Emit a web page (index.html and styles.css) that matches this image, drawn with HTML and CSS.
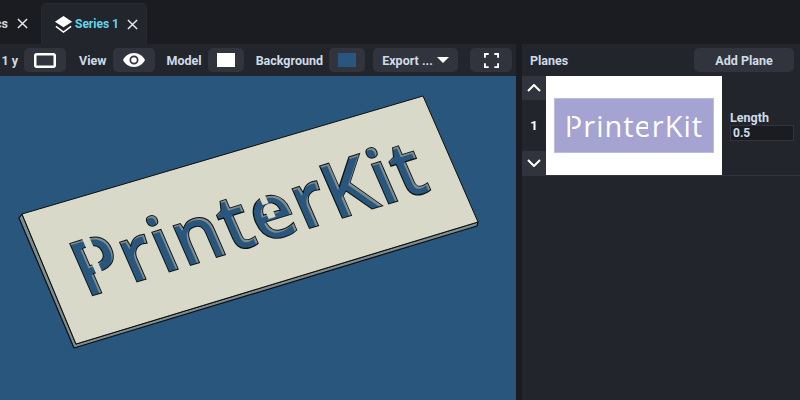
FILE: index.html
```html
<!DOCTYPE html>
<html lang="en">
<head>
<meta charset="utf-8">
<title>Series 1</title>
<link rel="stylesheet" href="styles.css">
</head>
<body>
<div class="app">
  <header class="tabs">
    <div class="tab-strip">
      <div class="tab">
        <span class="tab-name">Statistics</span>
        <svg class="close" viewBox="0 0 12 12"><path d="M1 1 11 11M11 1 1 11"/></svg>
      </div>
      <div class="tab active">
        <svg class="layers" viewBox="0 0 20 20"><path class="solid" d="M10 1 19 7 10 13 1 7Z"/><path class="line" d="M2 12 10 18 18 12"/></svg>
        <span class="tab-name">Series 1</span>
        <svg class="close" viewBox="0 0 12 12"><path d="M1 1 11 11M11 1 1 11"/></svg>
      </div>
    </div>
  </header>
  <main class="workspace">
    <section class="viewer">
      <div class="toolbar">
        <span class="label">1 y</span>
        <button class="btn icon-btn"><svg class="frame" viewBox="0 0 22 15"><rect x="1.250" y="1.250" width="19.500" height="12.500" rx="1.500"/></svg></button>
        <span class="label gap">View</span>
        <button class="btn icon-btn"><svg class="eye" viewBox="0 0 24 16"><path d="M12 1C7 1 3 4 1 8c2 4 6 7 11 7s9-3 11-7c-2-4-6-7-11-7Zm0 11.500A4.500 4.500 0 1 1 12 3.500a4.500 4.500 0 0 1 0 9Zm0-7.300a2.800 2.800 0 1 0 0 5.600 2.800 2.800 0 0 0 0-5.600Z"/></svg></button>
        <span class="label gap">Model</span>
        <button class="btn swatch-btn"><span class="swatch white"></span></button>
        <span class="label gap">Background</span>
        <button class="btn swatch-btn"><span class="swatch blue"></span></button>
        <button class="btn export">Export ...<span class="caret"></span></button>
        <button class="btn icon-btn full"><svg class="corners" viewBox="0 0 16 16"><path d="M1 5V1H5M11 1H15V5M15 11V15H11M5 15H1V11"/></svg></button>
      </div>
      <svg class="scene" viewBox="0 0 516 324">
        <defs>
          <clipPath id="letters"><text class="stencil" x="-4" y="0">PrinterKit</text></clipPath>
        </defs>
        <g transform="translate(0 -76)">
          <path class="edge" d="M22 214 19 218 74 348 477 226 478 222 76 344Z"/>
          <path class="plate" d="M22 214 423 96 478 222 76 344Z"/>
          <g transform="matrix(1 -.31 .4365 1 90 296)">
            <text class="stencil s-line" x="-4" y="0">PrinterKit</text>
            <g clip-path="url(#letters)">
              <rect class="s-wall-box" x="-20" y="-80" width="400" height="120"/>
              <text class="stencil s-hole" x="-6" y="1.500">PrinterKit</text>
            </g>
            <rect class="bridge" x="15" y="-56" width="7" height="14"/>
            <rect class="bridge" x="14" y="-29" width="6" height="14"/>
            <rect class="bridge" x="187" y="-44" width="6" height="11"/>
            <rect class="bridge" x="187" y="-29" width="7" height="10"/>
          </g>
        </g>
      </svg>
    </section>
    <aside class="panel">
      <div class="panel-head">
        <span class="label">Planes</span>
        <button class="btn add">Add Plane</button>
      </div>
      <div class="plane">
        <div class="stepper">
          <button class="step"><svg viewBox="0 0 14 8"><path d="M1 7 7 1 13 7"/></svg></button>
          <span class="index">1</span>
          <button class="step"><svg viewBox="0 0 14 8"><path d="M1 1 7 7 13 1"/></svg></button>
        </div>
        <div class="thumb">
          <div class="thumb-rect"><span class="thumb-text">PrinterKit</span></div>
        </div>
        <div class="field">
          <span class="label">Length</span>
          <div class="input">0.5</div>
        </div>
      </div>
    </aside>
  </main>
</div>
</body>
</html>
```
FILE: styles.css
```css
* { box-sizing: border-box; }
html, body { margin: 0; height: 100%; }
body { background: #1b1c21; font-family: Roboto, "Liberation Sans", sans-serif; color: #dbe5f0; overflow: hidden; }
.app { width: 800px; height: 400px; display: flex; flex-direction: column; }

.tabs { height: 44px; flex: none; display: flex; padding-top: 3px; }
.tab-strip { width: 147px; display: flex; justify-content: flex-end; overflow: hidden; }
.tab { flex: none; height: 41px; display: flex; align-items: center; gap: 9px; padding: 0 13px 0 8px; font-size: 12.500px; font-weight: 700; color: #d4d8de; }
.tab.active { width: 106px; padding: 0 0 0 12px; gap: 2px; background: #22252c; border-radius: 5px 5px 0 0; color: #62d6ee; border: 1px solid #26292f; border-bottom: 0; font-size: 12px; }
.tab-name { white-space: nowrap; }
.close { width: 11px; height: 11px; fill: none; stroke: #e6e8ea; stroke-width: 1.600; flex: none; }
.tab.active .close { margin-left: 6px; }
.layers { width: 19px; height: 19px; flex: none; }
.layers .solid { fill: #fff; }
.layers .line { fill: none; stroke: #fff; stroke-width: 1.600; }

.workspace { flex: 1; display: flex; min-height: 0; }
.viewer { width: 516px; flex: none; display: flex; flex-direction: column; background: #22252c; }
.toolbar { height: 32px; flex: none; display: flex; justify-content: flex-end; align-items: center; padding: 0 4px 0 0; overflow: hidden; }
.label { font-size: 12.500px; font-weight: 700; color: #cfdcea; white-space: nowrap; }
.gap { margin-left: 12px; margin-right: 6px; }
.toolbar > .label:first-child { margin-right: 6px; }
.toolbar > .label + .icon-btn:nth-child(2) { margin-right: 1px; }
.btn { height: 24px; border: 0; border-radius: 5px; background: #31343c; color: #cfdcea; font: 700 12.500px Roboto, "Liberation Sans", sans-serif; display: flex; align-items: center; justify-content: center; padding: 0; flex: none; }
.icon-btn { width: 42px; }
.swatch-btn { width: 36px; }
.frame { width: 22px; height: 15px; fill: none; stroke: #fff; stroke-width: 2.500; }
.eye { width: 24px; height: 16px; fill: #fff; }
.swatch { width: 18px; height: 14px; }
.swatch.white { background: #fff; }
.swatch.blue { background: #28567d; }
.export { width: 85px; margin-left: 8px; gap: 4px; }
.caret { width: 0; height: 0; border-left: 6.500px solid transparent; border-right: 6.500px solid transparent; border-top: 6.500px solid #fff; }
.full { margin-left: 12px; }
.corners { width: 15px; height: 15px; fill: none; stroke: #fff; stroke-width: 2; }

.scene { display: block; width: 516px; height: 324px; background: #28567d; }
.plate { fill: #d9d9c9; stroke: #0c0f0f; stroke-width: 1; stroke-linejoin: round; }
.edge { fill: #7e8c8e; stroke: #0c0f0f; stroke-width: 1.200; stroke-linejoin: round; }
.stencil { font-family: "Open Sans", sans-serif; font-size: 72px; font-weight: 600; letter-spacing: 1.100px; }
.s-line { fill: #0c0f0f; stroke: #0c0f0f; stroke-width: 1.800; }
.s-wall-box { fill: #7e8c8e; }
.s-hole { fill: #28567d; }
.bridge { fill: #d9d9c9; }

.panel { flex: 1; margin-left: 6px; background: #22252c; display: flex; flex-direction: column; min-width: 0; }
.panel-head { height: 32px; flex: none; display: flex; align-items: center; justify-content: space-between; padding: 0 6px 0 8px; }
.add { width: 100px; }
.plane { height: 100px; display: flex; border-bottom: 1px solid #31343c; }
.stepper { width: 24px; flex: none; display: flex; flex-direction: column; align-items: stretch; }
.step { height: 24px; border: 0; background: #31343c; padding: 0; display: flex; align-items: center; justify-content: center; }
.step svg { width: 14px; height: 8px; fill: none; stroke: #fff; stroke-width: 2; }
.index { flex: 1; display: flex; align-items: center; justify-content: center; font-size: 13px; font-weight: 700; color: #fff; }
.thumb { width: 176px; height: 99px; flex: none; background: #fff; display: flex; align-items: center; justify-content: center; }
.thumb-rect { position: relative; width: 160px; height: 55px; background: #a5a3d2; border: 1px solid #bdbce0; display: flex; align-items: center; justify-content: center; }
.thumb-rect::before { content: ""; position: absolute; left: 15px; top: 14px; width: 2px; height: 24px; background: linear-gradient(#a5a3d2 0 5px, transparent 5px 13px, #a5a3d2 13px 17px, transparent 17px); }
.thumb-rect::after { content: ""; position: absolute; left: 93px; top: 20px; width: 2px; height: 14px; background: #a5a3d2; }
.thumb-text { font-family: "Open Sans", sans-serif; font-size: 29px; letter-spacing: 1px; color: #fff; }
.field { margin-left: 8px; padding-top: 34px; display: flex; flex-direction: column; width: 64px; }
.input { height: 16px; background: #1b1c21; border: 1px solid #31343c; font-size: 12px; font-weight: 700; line-height: 14px; padding-left: 2px; color: #cfdcea; }
```
